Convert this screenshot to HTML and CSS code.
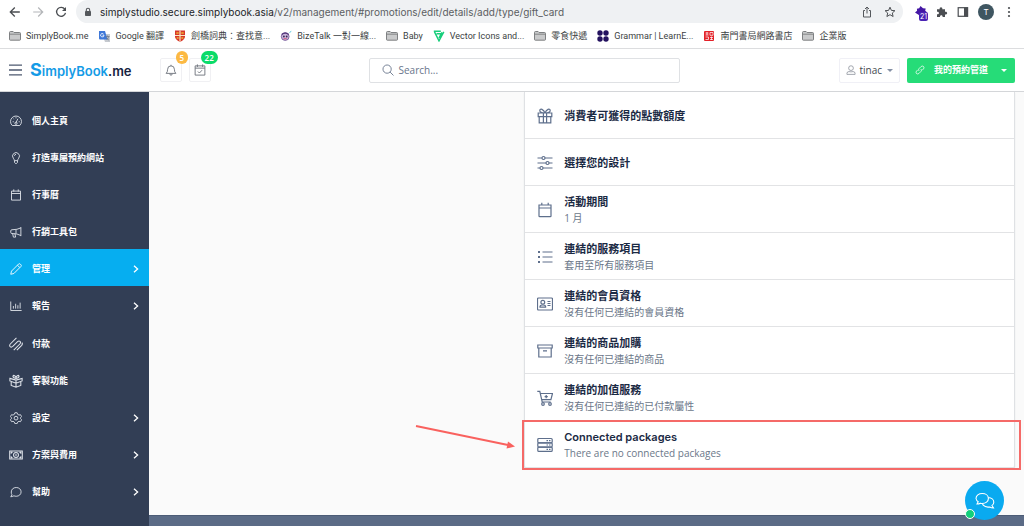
FILE: index.html
```html
<!DOCTYPE html>
<html lang="zh-Hant">
<head>
<meta charset="utf-8">
<meta name="viewport" content="width=device-width, initial-scale=1">
<title>SimplyBook.me</title>
<link rel="stylesheet" href="styles.css">
</head>
<body>
<svg class="defs" aria-hidden="true">
  <symbol id="folder" viewBox="0 0 12 12"><path d="M.5 9.5v-7q0-1 1-1h2.6l1 1h5.4q1 0 1 1v6q0 .7-.8.7H1.3q-.8 0-.8-.7z" fill="#c9cacb" stroke="#737577" stroke-width=".9"/><path d="M.8 4.2h10.4" stroke="#737577" stroke-width=".8"/></symbol>
  <symbol id="chevron" viewBox="0 0 6 8"><path d="M1 .8L4.6 4 1 7.2" fill="none" stroke="currentColor" stroke-width="1.3"/></symbol>
  <symbol id="gift" viewBox="0 0 16 16"><path d="M1.2 5h13.6v3.6H1.2zM2.2 8.6h11.6v6.2H2.2zM6.4 5v9.8M9.6 5v9.8M8 5C6.500 1 3.200.2 2.800 2.400 2.500 4.200 5 5 8 5zM8 5c1.500-4 4.800-4.800 5.200-2.600C13.500 4.200 11 5 8 5z"/></symbol>
</svg>

<div class="toolbar">
  <div class="nav">
    <button type="button" aria-label="Back"><svg class="i12" viewBox="0 0 12 12"><path d="M10.800 6H1.500M5.800 1.500L1.300 6l4.500 4.500" fill="none" stroke="#4b4e52" stroke-width="1.3"/></svg></button>
    <button type="button" aria-label="Forward"><svg class="i12" viewBox="0 0 12 12"><path d="M1.200 6h9.300M6.200 1.500L10.700 6l-4.500 4.500" fill="none" stroke="#b4b6b9" stroke-width="1.200"/></svg></button>
    <button type="button" aria-label="Reload"><svg class="i12" viewBox="0 0 12 12"><path d="M9.800 3.200A4.500 4.500 0 1 0 10.500 6.800" fill="none" stroke="#4b4e52" stroke-width="1.300"/><path d="M11 1v4H7z" fill="#4b4e52"/></svg></button>
  </div>
  <div class="address">
    <svg class="lock" viewBox="0 0 8 10"><path d="M2.300 4.500V3a1.700 1.700 0 0 1 3.400 0v1.500" fill="none" stroke="#55585c" stroke-width="1.100"/><rect x="1" y="4" width="6" height="5" rx=".8" fill="#55585c"/></svg>
    <span class="url"><b>simplystudio.secure.simplybook.asia</b>/v2/management/#promotions/edit/details/add/type/gift_card</span>
    <button type="button" aria-label="Share"><svg class="i12" viewBox="0 0 12 12"><path d="M4 4.500H2.500v6.500h7V4.500H8M6 7.500V1M4 3l2-2 2 2" fill="none" stroke="#55585c" stroke-width="1"/></svg></button>
    <button type="button" aria-label="Bookmark"><svg class="i12" viewBox="0 0 12 12"><path d="M6 1.200l1.400 3.200 3.500.3-2.600 2.300.8 3.500L6 8.700l-3.100 1.800.8-3.500L1.100 4.700l3.500-.3z" fill="none" stroke="#4b4e52" stroke-width="1"/></svg></button>
  </div>
  <div class="extensions">
    <button type="button" class="ext" aria-label="Extension"><svg class="i12" viewBox="0 0 12 12"><path d="M5.500 0l2.500 2.200 2.700.3-.5 2.300L12 6.300l-2.300 1.200L6 10.500 3.500 8.800.0 6.500l2.100-1.800-.2-2 2.300-.5z" fill="#4417a4"/></svg><span class="ext-badge">21</span></button>
    <button type="button" aria-label="Extensions"><svg class="i12" viewBox="0 0 12 12"><path d="M1 3.300h2.700C3 .4 7 .4 6.300 3.300H9v2.500c2.900-.6 2.900 3.200 0 2.700V11H6.600C7 8.500 3.700 8.500 4 11H1V8.300c2.600.4 2.600-3 0-2.600z" fill="#4b4e52"/></svg></button>
    <button type="button" aria-label="Side panel"><svg class="i12" viewBox="0 0 12 12"><rect x="1.200" y="1.700" width="9.400" height="8.600" fill="none" stroke="#4b4e52" stroke-width="1.200"/><path d="M7 1.500h4v9H7z" fill="#4b4e52"/></svg></button>
    <button type="button" class="avatar">T</button>
    <button type="button" aria-label="Menu"><svg class="i12" viewBox="0 0 12 12" fill="#4b4e52"><circle cx="6" cy="2" r="1.100"/><circle cx="6" cy="6" r="1.100"/><circle cx="6" cy="10" r="1.100"/></svg></button>
  </div>
</div>

<nav class="bookmarks" aria-label="Bookmarks">
  <a href="#"><svg class="i12"><use href="#folder"/></svg>SimplyBook.me</a>
  <a href="#"><svg class="i12" viewBox="0 0 12 12"><path d="M4 4h8v8H7z" fill="#c5c9cf"/><path d="M1 1h6l2.500 8.500H2q-1 0-1-1z" fill="#3f78d8"/><path d="M6 5.200H4.500M6 5.200A1.700 1.700 0 1 1 5.500 4" fill="none" stroke="#fff" stroke-width=".8"/><path d="M7.500 6.500h4M9.500 5.500v1M10.700 6.500q-.7 2.500-2 3.500M8.700 7.500q.7 1.700 2.300 2.700" fill="none" stroke="#6c7481" stroke-width=".7"/></svg>Google 翻譯</a>
  <a href="#"><svg class="i12" viewBox="0 0 12 12"><path d="M1 .5h10v6.500q-.8 3.200-5 4.800-4.200-1.600-5-4.800z" fill="#d8362a"/><path d="M6 .5v11M1 5.500h10" stroke="#f7e9c3" stroke-width="1.200"/><path d="M2.300 3h2.400M7.300 3h2.400M2.700 8h2M7.300 8h2" stroke="#eeb232" stroke-width="1.600"/></svg>劍橋詞典：查找意...</a>
  <a href="#"><svg class="i12" viewBox="0 0 12 12"><circle cx="5.200" cy="6.500" r="3.900" fill="#c8b5db" stroke="#6b4d91" stroke-width=".8"/><path d="M1.800 4.500q3.400-2.800 6.800 0" stroke="#54397a" stroke-width="1.200" fill="none"/><circle cx="3.900" cy="6.500" r=".9" fill="#382752"/><circle cx="6.700" cy="6.500" r=".9" fill="#382752"/><path d="M3.700 8.700h3" stroke="#d7587b"/><path d="M9.500 2.500l1.800-1.200" stroke="#52c5dd"/></svg>BizeTalk 一對一線...</a>
  <a href="#"><svg class="i12"><use href="#folder"/></svg>Baby</a>
  <a href="#"><svg class="i12" viewBox="0 0 12 12"><path d="M.8 1.300h7M1.500 1.800l4.500 9 4.800-9M3.600 3.700h4M6.100 8l2.800-5.700" fill="none" stroke="#17ce7b" stroke-width="1.500"/></svg>Vector Icons and...</a>
  <a href="#"><svg class="i12"><use href="#folder"/></svg>零食快遞</a>
  <a href="#"><svg class="i12" viewBox="0 0 12 12" fill="#24125f"><circle cx="3" cy="3" r="2.700"/><circle cx="9" cy="3" r="2.700"/><circle cx="3" cy="9" r="2.700"/><circle cx="9" cy="9" r="2.700"/></svg>Grammar | LearnE...</a>
  <a href="#"><svg class="i12" viewBox="0 0 12 12"><rect x="1" y="1" width="10" height="10" rx="1" fill="#e32128"/><path d="M2.500 3h3M4 2v3M2.500 5h3M7 2.500h3v2.800H7zM2.500 7h3v2.500h-3M7 7.500h3M8.500 6.500v3.500M7 9.500h3" fill="none" stroke="#fff" stroke-width=".7"/></svg>南門書局網路書店</a>
  <a href="#"><svg class="i12"><use href="#folder"/></svg>企業版</a>
</nav>

<header class="header">
  <button type="button" class="burger" aria-label="Toggle menu"><svg viewBox="0 0 13 12"><path d="M0 1.200h13M0 6h13M0 10.800h13" stroke="#4e5a70" stroke-width="1.300"/></svg></button>
  <a href="#" class="logo"><span class="logo-s">S</span>implyBook<span class="logo-me">.me</span></a>
  <div class="alerts">
    <button type="button" class="alert" aria-label="Notifications"><svg class="i12 line" viewBox="0 0 16 16"><path d="M1.500 12.500q2-1.500 2-5.500a4.500 4.500 0 0 1 9 0q0 4 2 5.500zM6.500 13q0 2 1.500 2t1.500-2M8 1v1.500"/></svg><span class="badge orange">5</span></button>
    <button type="button" class="alert" aria-label="Bookings"><svg class="i12 line" viewBox="0 0 16 16"><path d="M1.500 2.500h13v12.300h-13zM1.500 5.500h13M4.500.5v3.500M11.500.5v3.500M5.200 10l2 2 3.600-3.800"/></svg><span class="badge green">22</span></button>
  </div>
  <label class="search"><svg class="i12 line" viewBox="0 0 16 16"><circle cx="6.800" cy="6.800" r="5.500"/><path d="M10.800 10.800l4.500 4.500"/></svg><input type="text" placeholder="Search..." aria-label="Search"></label>
  <div class="account">
    <button type="button" class="user"><svg class="i10 line" viewBox="0 0 16 16"><circle cx="8" cy="5" r="3.800"/><path d="M1.500 15v-1.500q0-3 3.200-3 3.300 1 6.600 0 3.200 0 3.200 3V15z"/></svg>tinac<span class="caret"></span></button>
    <button type="button" class="channel"><svg class="i10 line" viewBox="0 0 16 16"><path d="M6.500 9.500q-1.800-2 0-3.800l3.300-3.300q1.900-1.500 3.800 0 1.500 1.900 0 3.800l-2 2M9.500 6.500q1.800 2 0 3.800l-3.300 3.300q-1.900 1.500-3.800 0-1.500-1.900 0-3.800l2-2"/></svg><span>我的預約管道</span><span class="caret"></span></button>
  </div>
</header>

<div class="layout">
  <nav class="sidebar" aria-label="Main">
    <a href="#"><svg class="i12 line" viewBox="0 0 16 16"><path d="M3 14a7.300 7.300 0 1 1 10 0zM8 10l2.500-5M8 3v1.500M3.500 9H5M4.700 5l.8.800M11.500 9H13"/><circle cx="8" cy="11" r="1.500"/></svg>個人主頁</a>
    <a href="#"><svg class="i12 line" viewBox="0 0 16 16"><path d="M5.800 11.500Q5.800 10 4.400 8.300a4.600 4.600 0 1 1 7.200 0Q10.200 10 10.200 11.500zM6 11.500v2.300l1.300 1.500h1.400L10 13.800v-2.300M5.800 5q.4-1.600 2.200-1.900"/></svg>打造專屬預約網站</a>
    <a href="#"><svg class="i12 line" viewBox="0 0 16 16"><path d="M2 2.800h12v12H2zM2 6h12M5 .5v3M11 .5v3"/></svg>行事曆</a>
    <a href="#"><svg class="i12 line" viewBox="0 0 16 16"><path d="M14.500 1.500v12M14.500 2.500Q10 5 2.500 5 1 5 1 6.500v2Q1 10 2.500 10q7.500 0 12 2.700M8 5v5M3.500 10l1 4.800h3L6.500 10"/></svg>行銷工具包</a>
    <a href="#" class="active" aria-current="page"><svg class="i12 line" viewBox="0 0 16 16"><path d="M1 15l1-4.200L11.500 1.300q1-.8 2 0l1.200 1.200q.8 1 0 2L5.200 14zM10 3l3 3"/></svg>管理<svg class="chev"><use href="#chevron"/></svg></a>
    <a href="#"><svg class="i12 line" viewBox="0 0 16 16"><path d="M1 2v12h14.500M4.500 11.500V8M7.500 11.500V5M10.500 11.500V7M13.500 11.500V3.500"/></svg>報告<svg class="chev"><use href="#chevron"/></svg></a>
    <a href="#" class="gap"><svg class="i14 line" viewBox="0 0 16 16"><path d="M8.500 1L1.500 8q-1.400 1.700-.2 3 1.400 1.200 3-.2L9.800 5.300q1.600-1.400 2.800-.2 1.200 1.300-.2 2.900L5.400 15M9 15l5.500-5.500q1.400-1.700.2-3.100"/></svg>付款</a>
    <a href="#"><svg class="i14 line" viewBox="0 0 16 16"><path d="M1 5l7 2 7-2v3l-7 2.500L1 8zM2.500 9v4L8 15l5.500-2V9M8 7.500V15M8 5Q4.500 4.500 4.500 2.500 5.500.2 8 3.500 10.500.2 11.500 2.500 11.500 4.500 8 5z"/></svg>客製功能</a>
    <a href="#"><svg class="i12 line" viewBox="0 0 16 16"><path d="M6.500 1h3l.6 2 1.900 1.100 2-.5 1.500 2.600L14 7.700v1.100l1.500 1.500-1.500 2.600-2-.5-1.900 1.100-.6 2h-3l-.6-2L4 12.400l-2 .5-1.500-2.600L2 8.800V7.700L.5 6.200 2 3.600l2 .5L5.900 3z"/><circle cx="8" cy="8.200" r="2.500"/></svg>設定<svg class="chev"><use href="#chevron"/></svg></a>
    <a href="#"><svg class="i14 line" viewBox="0 0 16 16"><path d="M.8 3.500h14.400v9H.8zM2.500 6.500V5H4M12 5h1.500v1.500M13.500 9.500V11H12M4 11H2.500V9.500"/><circle cx="8" cy="8" r="2.800"/><path d="M8 6.500v3"/></svg>方案與費用<svg class="chev"><use href="#chevron"/></svg></a>
    <a href="#"><svg class="i12 line" viewBox="0 0 16 16"><path d="M1 14.500l1.500-3A6 6 0 0 1 1.700 8C1.700 4.500 4.500 2 8.300 2s6.500 2.500 6.500 5.800-2.700 5.900-6.500 5.900q-1.600 0-3-.6z"/></svg>幫助<svg class="chev"><use href="#chevron"/></svg></a>
  </nav>

  <div class="page">
    <main class="content">
      <ul class="card">
        <li><svg class="i16 line"><use href="#gift"/></svg><div><h2>消費者可獲得的點數額度</h2></div></li>
        <li><svg class="i16 line" viewBox="0 0 16 16"><path d="M.5 3H5M8 3h7.500M.5 8H9M12 8h3.500M.5 13H3M6 13h9.500"/><circle cx="6.500" cy="3" r="1.500"/><circle cx="10.500" cy="8" r="1.500"/><circle cx="4.500" cy="13" r="1.500"/></svg><div><h2>選擇您的設計</h2></div></li>
        <li><svg class="i16 line" viewBox="0 0 16 16"><path d="M2 3h12v11q0 .7-.7.7H2.700q-.7 0-.7-.7zM2 6h12M4.800.8V3M11.200.8V3"/></svg><div><h2>活動期間</h2><p>1 月</p></div></li>
        <li><svg class="i16 line" viewBox="0 0 16 16"><path d="M5.500 3h10M5.500 8h10M5.500 13h10"/><path d="M1 3h2M1 8h2M1 13h2" stroke-width="2"/></svg><div><h2>連結的服務項目</h2><p>套用至所有服務項目</p></div></li>
        <li><svg class="i16 line" viewBox="0 0 16 16"><rect x=".5" y="2" width="15" height="12" rx="1"/><circle cx="5.800" cy="6.300" r="1.900"/><path d="M3 11.200v-.7q0-1.500 2.800-1.500t2.800 1.500v.7zM10.500 5.500h3M10.500 7.500h3M10.500 9.500h3"/></svg><div><h2>連結的會員資格</h2><p>沒有任何已連結的會員資格</p></div></li>
        <li><svg class="i16 line" viewBox="0 0 16 16"><path d="M.8 2h14.400v3H.8zM1.800 5h12.400v9H1.800zM6 7.800h4"/></svg><div><h2>連結的商品加購</h2><p>沒有任何已連結的商品</p></div></li>
        <li><svg class="i16 line" viewBox="0 0 16 16"><path d="M.3 1.300h2.500L5.200 12h8.500M3.300 3.500h12.200l-1.600 6.200H4.700M9.200 5v3.200M7.600 6.600h3.200"/><circle cx="6" cy="14" r="1.300"/><circle cx="13" cy="14" r="1.300"/></svg><div><h2>連結的加值服務</h2><p>沒有任何已連結的已付款屬性</p></div></li>
        <li class="marked"><svg class="i16 line" viewBox="0 0 16 16"><rect x=".8" y="1.500" width="14.400" height="4.300" rx="1"/><rect x=".8" y="5.800" width="14.400" height="4.300" rx="1"/><rect x=".8" y="10.100" width="14.400" height="4.300" rx="1"/><path d="M9.500 3.700H11M12 3.700h1.500M9.500 8H11M12 8h1.500M9.500 12.300H11M12 12.300h1.500"/></svg><div><h2>Connected packages</h2><p>There are no connected packages</p></div>
          <svg class="arrow" viewBox="0 0 100 26"><path d="M1 2l92 19" stroke="#f9615e" stroke-width="2"/><path d="M93 17.500l7 5-8.500 2z" fill="#f9615e"/></svg>
        </li>
      </ul>
    </main>
    <footer class="footer"></footer>
  </div>
</div>

<button type="button" class="chat" aria-label="Chat"><svg viewBox="0 0 20 18"><path d="M2 12l1.200-2.300A4.700 4.700 0 0 1 1 6.500C1 3.500 3.800 1.500 7.200 1.500s6.200 2 6.200 5-2.700 5-6.200 5q-1 0-1.900-.3-1.300.8-3.300.8zM13.400 5.500c3 .2 5.400 2.100 5.400 4.700a4.300 4.300 0 0 1-1.800 3.300l1.500 2.500q-2.200 0-3.800-1-4.200.7-6.500-1.800l-.7-1.500"/></svg><span class="online"></span></button>
</body>
</html>
```
FILE: styles.css
```css
* { box-sizing: border-box; }
body {
  margin: 0;
  min-height: 100vh;
  display: flex;
  flex-direction: column;
  background: #fff;
  color: #1b2a44;
  font: 10px/16px "Open Sans", "Noto Sans CJK TC", sans-serif;
}
button { border: 0; padding: 0; margin: 0; background: none; font: inherit; color: inherit; display: flex; align-items: center; justify-content: center; }
a { color: inherit; text-decoration: none; }
svg { display: block; flex: none; }
.defs { position: absolute; width: 0; height: 0; }
.i10 { width: 10px; height: 10px; }
.i12 { width: 12px; height: 12px; }
.i14 { width: 14px; height: 14px; }
.i16 { width: 16px; height: 16px; }
.line { fill: none; stroke: currentColor; stroke-width: 1.2; }

.toolbar { display: flex; align-items: center; height: 23px; padding: 0 9px; gap: 9px; font-family: Inter, "Noto Sans CJK TC", sans-serif; }
.nav { display: flex; gap: 11px; }
.address { flex: 1; min-width: 0; align-self: stretch; display: flex; align-items: center; gap: 11px; padding: 0 7px 0 8px; background: #eff1f3; border-radius: 12px; color: #5b5e62; }
.lock { width: 8px; height: 10px; margin-right: -3px; }
.url { flex: 1; min-width: 0; overflow: hidden; white-space: nowrap; font-size: 10px; }
.url b { font-weight: 400; color: #222428; }
.extensions { display: flex; align-items: center; gap: 9px; margin-left: 3px; }
.ext { position: relative; }
.ext-badge { position: absolute; left: 4px; top: 6px; padding: 0 1px; border-radius: 2px; background: #4a23b4; color: #fff; font-size: 7px; line-height: 9px; }
.avatar { width: 16px; height: 16px; border-radius: 50%; background: #3f5661; color: #fff; font-size: 8px; }

.bookmarks { display: flex; align-items: center; gap: 10px; height: 26px; padding: 0 9px; border-bottom: 1px solid #dcdddf; font: 9px/12px Roboto, "Noto Sans CJK TC", sans-serif; color: #3c3f43; white-space: nowrap; overflow: hidden; }
.bookmarks a { display: flex; align-items: center; gap: 5px; }

.header { display: flex; align-items: center; height: 43px; padding: 0 9px; border-bottom: 1px solid #d4d6d9; }
.burger svg { width: 13px; height: 12px; }
.logo { margin-left: 8px; color: #149be6; font: 600 13px/20px Inter, sans-serif; white-space: nowrap; }
.logo-s { font-size: 18px; font-weight: 700; }
.logo-me { color: #17233f; }
.alerts { display: flex; gap: 7px; margin-left: 28px; color: #6b7079; }
.alert { position: relative; width: 22px; height: 24px; border: 1px solid #f0f0f3; border-radius: 2px; }
.badge { position: absolute; top: -8px; left: 50%; min-width: 12px; height: 13px; padding: 0 4px; margin-left: 5px; border-radius: 7px; color: #fff; font: 600 8px/13px "Open Sans", sans-serif; }
.orange { background: #fcb943; }
.green { background: #0bdb69; margin-left: 1px; }
.search { flex: 0 1 311px; margin: 0 auto; height: 25px; display: flex; align-items: center; gap: 4px; padding: 0 12px; border: 1px solid #dfe1e4; border-radius: 2px; color: #68758b; }
.search input { flex: 1; min-width: 0; border: 0; padding: 0; background: none; font: inherit; color: inherit; outline: 0; }
.search input::placeholder { color: #68758b; opacity: 1; }
.account { display: flex; gap: 7px; white-space: nowrap; }
.user { height: 25px; padding: 0 6px; border: 1px solid #f0f0f6; border-radius: 2px; gap: 3px; color: #45494f; }
.user svg { color: #858b95; }
.caret { border: 3px solid transparent; border-top-color: #8490a5; border-bottom: 0; margin-left: 2px; }
.channel { height: 25px; padding: 0 8px; border-radius: 2px; gap: 9px; background: #26dc78; color: #fff; font-size: 9px; font-weight: 700; }
.channel .caret { border-top-color: #fff; margin-left: 4px; }

.layout { flex: 1; display: flex; }
.sidebar { flex: none; width: 149px; padding-top: 9px; background: #323e55; color: #fff; font-size: 9px; font-weight: 600; }
.sidebar a { display: flex; align-items: center; height: 37px; padding: 2px 10px 0; }
.sidebar .line { color: #dfe3ea; stroke-width: 1.2; margin-right: 10px; }
.sidebar .i14 { margin: 0 9px 0 -1px; }
.sidebar .active { background: #06aef0; }
.sidebar .active .line { color: #fff; }
.sidebar .gap { margin-top: 1px; }
.sidebar .chev { width: 6px; height: 8px; margin-left: auto; }

.page { flex: 1; min-width: 0; display: flex; flex-direction: column; background: #fafafa; }
.content { display: grid; grid-template-columns: minmax(0, 13fr) minmax(0, 17fr); padding: 0 9px 47px 0; }
.card { grid-column: 2; list-style: none; margin: 0; padding: 0; background: #fff; border: 1px solid #dfe1e4; border-top: 0; border-bottom: 0; border-radius: 0 0 3px 3px; box-shadow: 0 1px 1px #ccd2d6; }
.card li { display: flex; align-items: center; gap: 11px; height: 47px; padding: 1px 12px 0; border-bottom: 1px solid #e2e3e5; color: #5e6f8c; }
.card h2 { margin: 0; font: 600 11px/16px Inter, "Noto Sans CJK TC", sans-serif; color: #1b2a44; }
.card p { margin: 0; line-height: 16px; color: #6b7789; }
.card .marked { position: relative; }
.marked::after { content: ""; position: absolute; inset: -1px -7px -3px -3px; border: 2px solid #f56a68; }
.marked .arrow { position: absolute; right: calc(100% + 10px); top: 3px; width: 100px; height: 26px; }
.footer { flex: 1; min-height: 11px; background: #5b6b86; border-top: 1px solid #4c5c76; }

.chat { position: fixed; right: 20px; bottom: 6px; width: 39px; height: 39px; border-radius: 50%; background: #0aaaf0; }
.chat svg { width: 20px; height: 18px; fill: none; stroke: #fff; stroke-width: 1.1; }
.online { position: absolute; left: 0; bottom: 1px; width: 10px; height: 10px; border: 1px solid #fff; border-radius: 50%; background: #12cf7b; }
```
